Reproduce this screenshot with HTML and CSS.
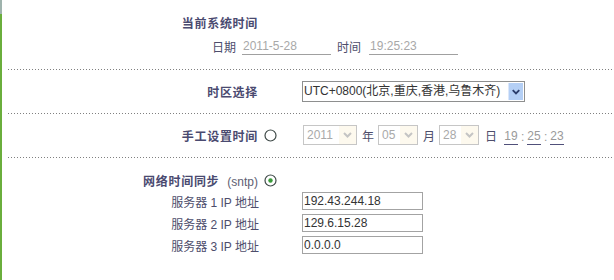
FILE: index.html
```html
<!DOCTYPE html>
<html>
<head>
    <title>时间设置</title>
    <link rel="stylesheet" href="styles.css">
</head>
<body>
<div class="page">
    <div class="rail"></div>
    <div class="main">
        <div class="row title-row">
            <div class="label bold">当前系统时间</div>
        </div>
        <div class="now-row">
            <span class="now-label">日期</span>
            <span class="now-value">2011-5-28</span>
            <span class="now-label second">时间</span>
            <span class="now-value">19:25:23</span>
        </div>

        <div class="sep sep-1"></div>

        <div class="row tz-row">
            <div class="label bold">时区选择</div>
            <div class="mark"></div>
            <div class="tz-select">
                <span class="tz-text">UTC+0800(北京,重庆,香港,乌鲁木齐)</span>
                <span class="tz-btn">
                    <svg width="15" height="17" viewBox="0 0 15 17"><polyline points="4,7 7.5,10.5 11,7" fill="none" stroke="#2b3d6b" stroke-width="2"/></svg>
                </span>
            </div>
        </div>

        <div class="sep sep-2"></div>

        <div class="row manual-row">
            <div class="label bold">手工设置时间</div>
            <div class="mark">
                <svg class="radio" width="13" height="13" viewBox="0 0 13 13"><circle cx="6.5" cy="6.5" r="5.5" fill="#fff" stroke="#3f4a48" stroke-width="1.2"/></svg>
            </div>
            <div class="sel year">
                <span class="sel-text">2011</span>
                <span class="sel-btn"><svg width="17" height="18" viewBox="0 0 17 18"><polyline points="5,7 8.5,10.5 12,7" fill="none" stroke="#c4c4c4" stroke-width="2"/></svg></span>
            </div>
            <span class="unit">年</span>
            <div class="sel small">
                <span class="sel-text">05</span>
                <span class="sel-btn"><svg width="17" height="18" viewBox="0 0 17 18"><polyline points="5,7 8.5,10.5 12,7" fill="none" stroke="#c4c4c4" stroke-width="2"/></svg></span>
            </div>
            <span class="unit">月</span>
            <div class="sel small">
                <span class="sel-text">28</span>
                <span class="sel-btn"><svg width="17" height="18" viewBox="0 0 17 18"><polyline points="5,7 8.5,10.5 12,7" fill="none" stroke="#c4c4c4" stroke-width="2"/></svg></span>
            </div>
            <span class="unit day">日</span>
            <span class="tf">19</span><span class="colon">:</span><span class="tf">25</span><span class="colon">:</span><span class="tf">23</span>
        </div>

        <div class="sep sep-3"></div>

        <div class="row sntp-row">
            <div class="label"><b class="bold">网络时间同步</b><span class="sntp">(sntp)</span></div>
            <div class="mark">
                <svg class="radio" width="13" height="13" viewBox="0 0 13 13"><circle cx="6.5" cy="6.5" r="5.5" fill="#fff" stroke="#3f4a48" stroke-width="1.2"/><circle cx="6.5" cy="6.5" r="2.2" fill="#3a9a3a"/></svg>
            </div>
        </div>

        <div class="row server-row">
            <div class="label">服务器 1 IP 地址</div>
            <div class="mark"></div>
            <input class="ip" type="text" value="192.43.244.18">
        </div>
        <div class="row server-row">
            <div class="label">服务器 2 IP 地址</div>
            <div class="mark"></div>
            <input class="ip" type="text" value="129.6.15.28">
        </div>
        <div class="row server-row">
            <div class="label">服务器 3 IP 地址</div>
            <div class="mark"></div>
            <input class="ip" type="text" value="0.0.0.0">
        </div>
    </div>
</div>
</body>
</html>
```

FILE: styles.css
```css
body { margin: 0; background: #fff; color: #4d4d6b; font: 12px "Liberation Sans", "Noto Sans CJK SC", sans-serif; }
.page { display: flex; min-height: 280px; }
.rail { width: 2px; background: linear-gradient(to bottom, #9fb3ad 0, #9fb3ad 14px, #6aae3c 14px); }
.main { flex: 1; padding-left: 6px; }

.row { display: flex; align-items: center; }
.label { width: 250px; flex-shrink: 0; text-align: right; white-space: nowrap; }
.bold { font-weight: bold; color: #4a4a70; letter-spacing: 0.7px; }
.mark { width: 44px; flex-shrink: 0; padding-left: 6px; box-sizing: border-box; display: flex; align-items: center; }

.title-row { margin-top: 15px; height: 14px; }

.now-row { display: flex; align-items: center; height: 18px; margin-top: 8px; padding-left: 204px; }
.now-label { margin-right: 6px; }
.now-label.second { margin-left: 6px; margin-right: 8px; }
.now-value { width: 88px; height: 16px; line-height: 16px; padding-left: 1px; border-bottom: 1px solid #a0a0a0; color: #a8a8a8; }

.sep { height: 1px; background-image: linear-gradient(to right, #808080 1px, transparent 1px); background-size: 3px 1px; }
.sep-1 { margin-top: 14px; }
.sep-2 { margin-top: 11px; }
.sep-3 { margin-top: 12px; }

.tz-row { margin-top: 11px; height: 21px; }
.tz-select { width: 223px; height: 21px; box-sizing: border-box; border: 1px solid #8e8f8f; display: flex; background: #fff; }
.tz-text { flex: 1; min-width: 0; padding-left: 1px; line-height: 19px; color: #333; white-space: nowrap; }
.tz-btn { width: 15px; height: 17px; margin: 1px; flex-shrink: 0; background: #b4cff5; border-left: 1px solid #dbe7fa; box-sizing: border-box; display: flex; }

.manual-row { margin-top: 11px; height: 20px; }
.sel { height: 20px; box-sizing: border-box; border: 1px solid #c6c6c6; display: flex; background: #fff; }
.sel.year { width: 54px; margin-left: 1px; }
.sel.small { width: 40px; }
.sel-text { flex: 1; padding-left: 3px; line-height: 18px; color: #a9a9a9; }
.sel-btn { width: 17px; background: #fdf9ee; display: flex; }
.unit { margin: 0 4px 0 5px; }
.unit.day { margin: 0 7px 0 6px; }
.tf { width: 14px; height: 15px; line-height: 15px; margin-top: 3px; text-align: center; color: #9a9a9a; border-bottom: 1px solid #50507a; }
.colon { width: 9px; text-align: center; color: #9a9a9a; margin-top: 3px; }

.sntp-row { margin-top: 14px; height: 16px; }
.sntp { margin-left: 8px; color: #5e5e72; }

.server-row { margin-top: 4px; height: 18px; }
.server-row .label { width: 251px; }
.ip { width: 121px; height: 18px; box-sizing: border-box; margin: 0 0 0 -1px; padding: 0 0 0 1px; border: 1px solid #a3a3a3; color: #333; font: 12px "Liberation Sans", sans-serif; outline: none; }
```
